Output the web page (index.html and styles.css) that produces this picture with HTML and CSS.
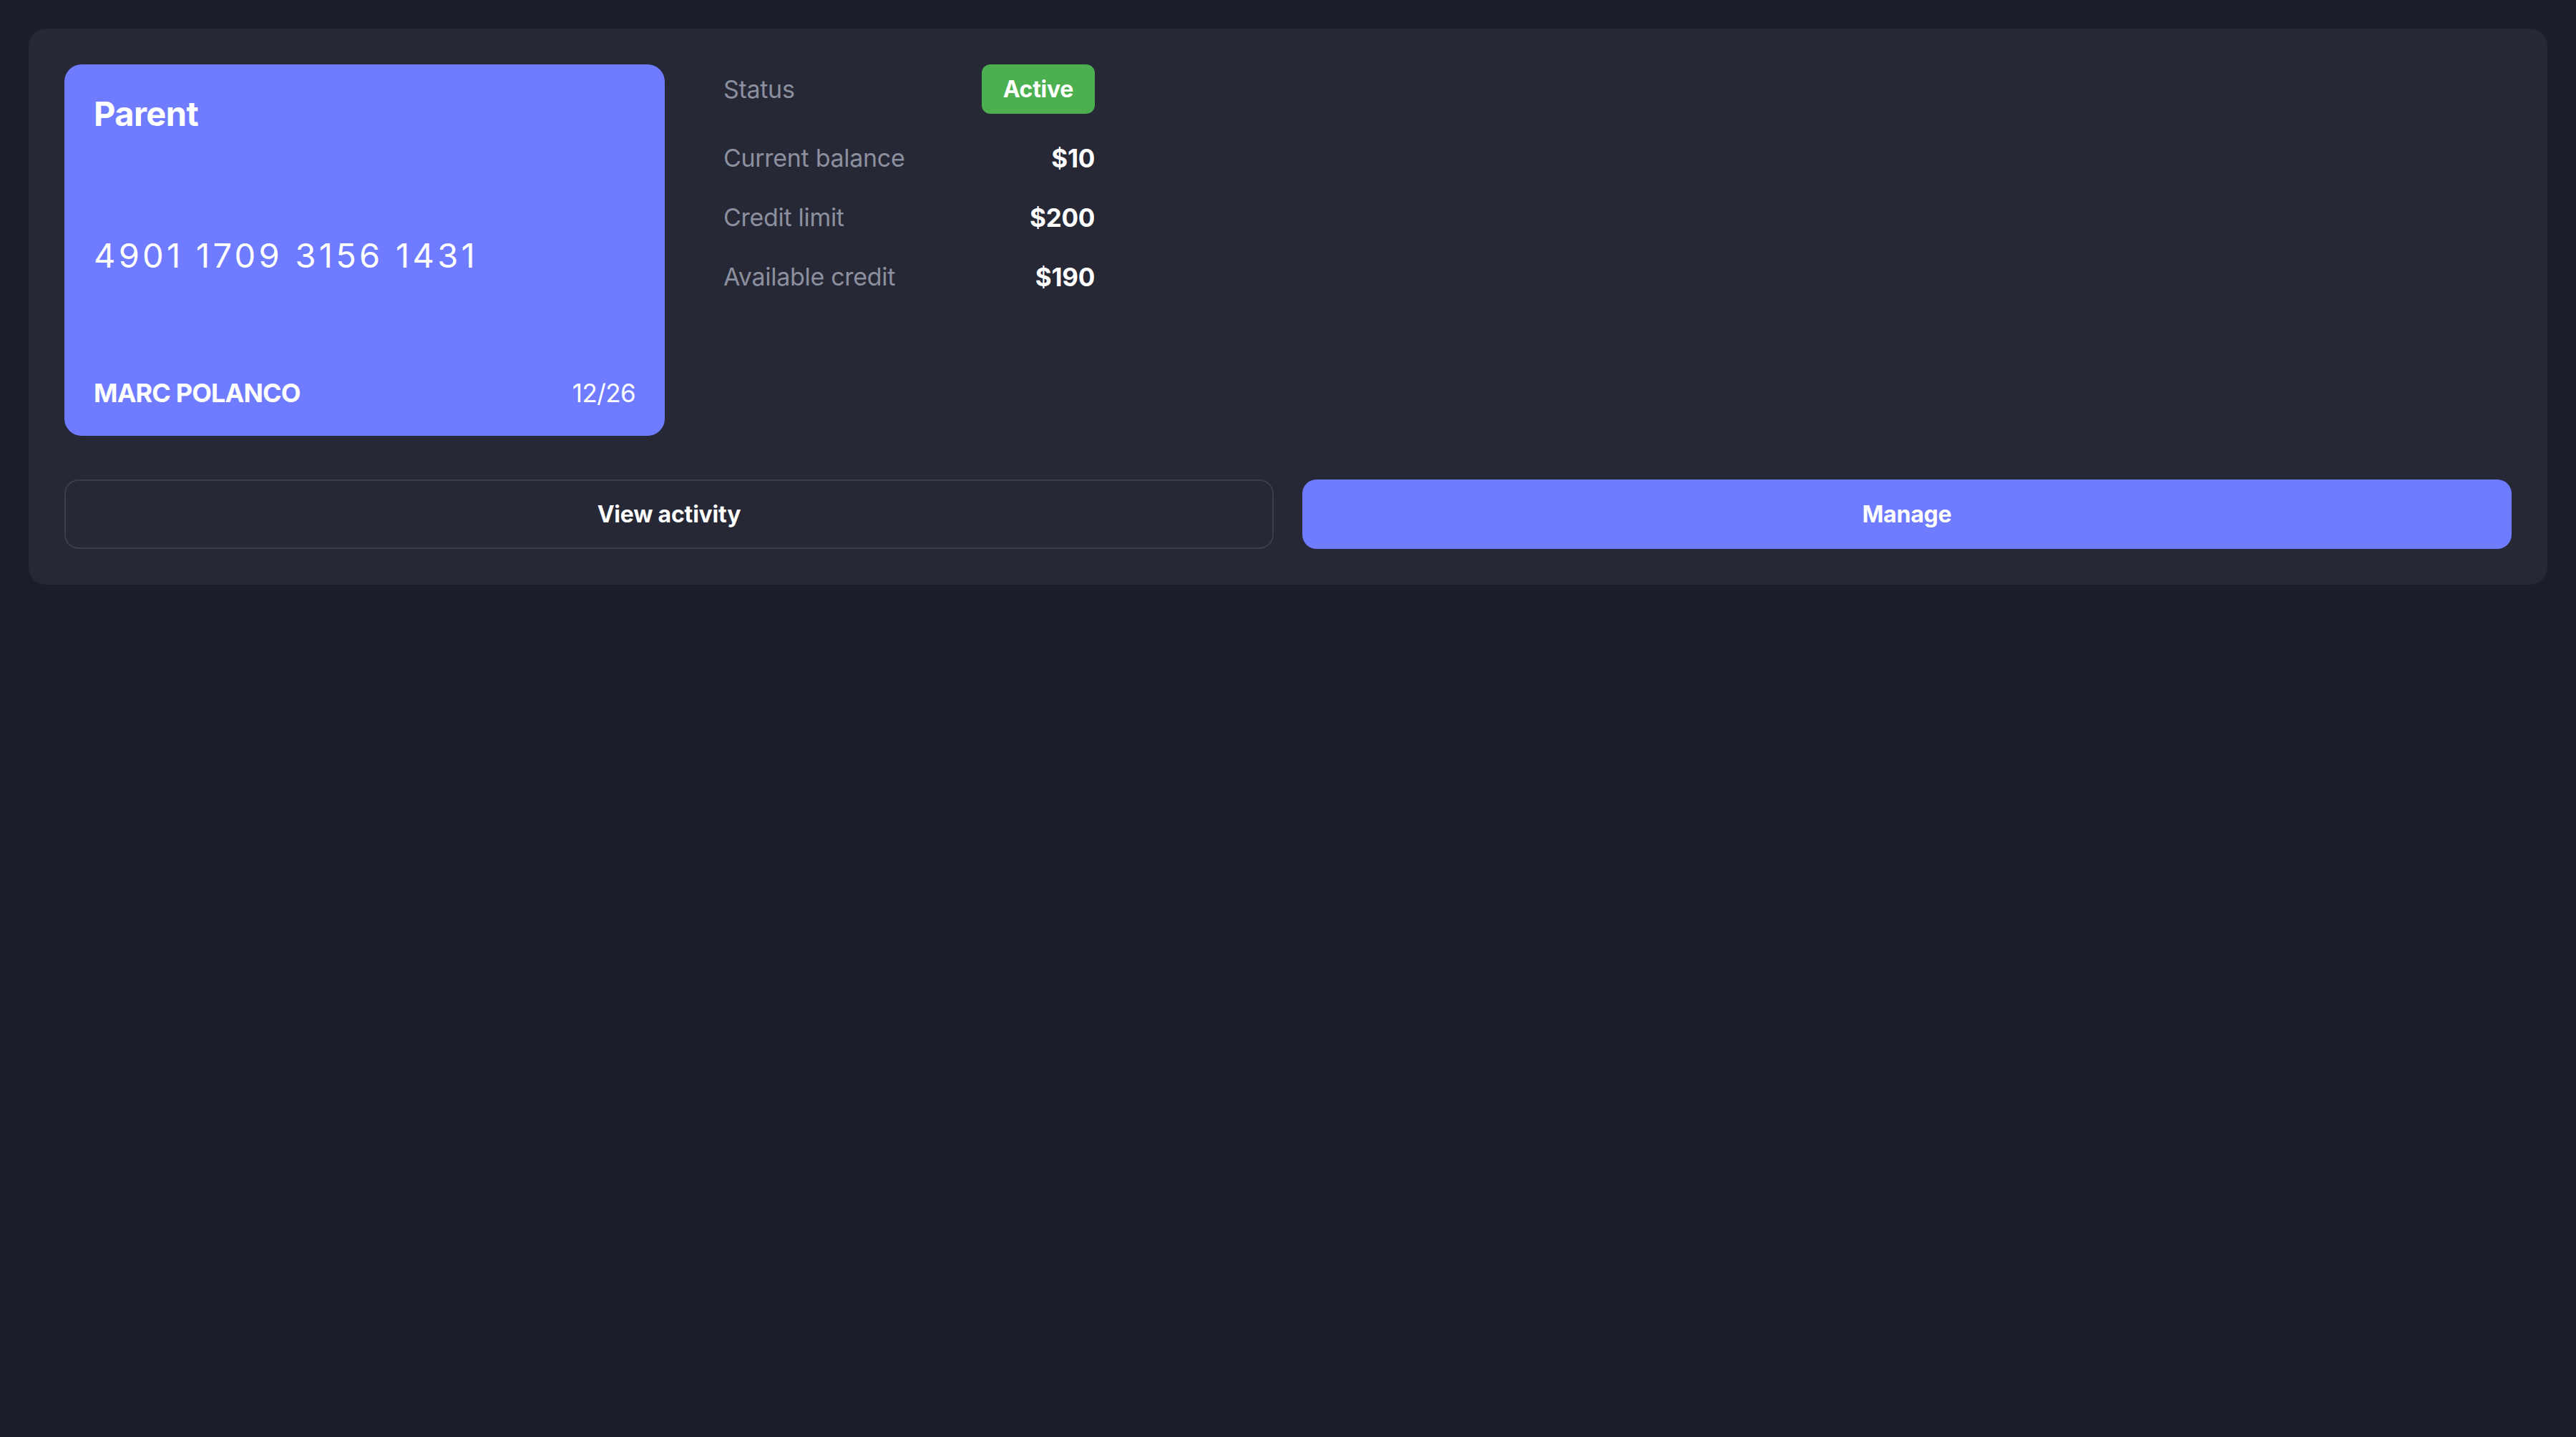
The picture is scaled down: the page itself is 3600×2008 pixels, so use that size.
FILE: index.html
```html
<!DOCTYPE html>
<html lang="en">
<head>
<meta charset="utf-8">
<title>Card</title>
<link rel="stylesheet" href="styles.css">
</head>
<body>
<main class="page">
  <section class="panel">
    <div class="top">
      <div class="card">
        <div class="card-title">Parent</div>
        <div class="card-number">4901 1709 3156 1431</div>
        <div class="card-foot">
          <span class="card-name">MARC POLANCO</span>
          <span class="card-exp">12/26</span>
        </div>
      </div>
      <div class="info">
        <div class="row row-status">
          <span class="label">Status</span>
          <span class="badge">Active</span>
        </div>
        <div class="row">
          <span class="label">Current balance</span>
          <span class="value">$10</span>
        </div>
        <div class="row">
          <span class="label">Credit limit</span>
          <span class="value">$200</span>
        </div>
        <div class="row">
          <span class="label">Available credit</span>
          <span class="value">$190</span>
        </div>
      </div>
    </div>
    <div class="actions">
      <button class="btn btn-outline">View activity</button>
      <button class="btn btn-primary">Manage</button>
    </div>
  </section>
</main>
</body>
</html>
```
FILE: styles.css
```css
* { box-sizing: border-box; }
html, body {
  margin: 0;
  padding: 0;
  background: #1b1d2a;
}
body {
  font-family: Inter, "Noto Sans", "Liberation Sans", sans-serif;
  color: #ffffff;
}
.page {
  padding: 40px;
}
.panel {
  background: #262836;
  border-radius: 24px;
  padding: 50px;
  display: flex;
  flex-direction: column;
  gap: 61px;
}
.top {
  display: flex;
  align-items: flex-start;
  gap: 82px;
}
.card {
  width: 839px;
  height: 519px;
  background: #6f7cff;
  border-radius: 24px;
  padding: 45px 41px 42px 41px;
  display: flex;
  flex-direction: column;
  justify-content: space-between;
}
.card-title {
  font-size: 47px;
  line-height: 47px;
  font-weight: 700;
  letter-spacing: -0.6px;
}
.card-number {
  font-size: 47px;
  line-height: 47px;
  font-weight: 400;
  letter-spacing: 4.3px;
}
.card-foot {
  display: flex;
  justify-content: space-between;
  align-items: baseline;
  font-size: 36px;
  line-height: 36px;
}
.card-name {
  font-weight: 700;
  letter-spacing: -0.9px;
}
.card-exp {
  font-weight: 400;
  font-size: 35px;
  letter-spacing: -0.6px;
}
.info {
  width: 519px;
  display: flex;
  flex-direction: column;
  gap: 41px;
}
.row {
  display: flex;
  justify-content: space-between;
  align-items: center;
  height: 42px;
  font-size: 34px;
  line-height: 42px;
}
.row-status {
  height: 69px;
}
.label {
  color: #8c8f9e;
  font-weight: 400;
  letter-spacing: -0.3px;
}
.value {
  color: #ffffff;
  font-weight: 700;
  font-size: 35px;
  letter-spacing: -0.3px;
}
.badge {
  background: #4caf50;
  color: #ffffff;
  font-size: 32px;
  font-weight: 700;
  line-height: 69px;
  height: 69px;
  padding: 0 30px;
  border-radius: 12px;
  letter-spacing: -0.3px;
}
.actions {
  display: grid;
  grid-template-columns: 1fr 1fr;
  gap: 40px;
}
.btn {
  height: 97px;
  border-radius: 20px;
  font-family: inherit;
  font-size: 32px;
  font-weight: 700;
  letter-spacing: -0.2px;
  color: #ffffff;
  cursor: pointer;
}
.btn-outline {
  background: #262836;
  border: 2px solid #3b3d4c;
}
.btn-primary {
  background: #6f7cff;
  border: none;
}
```
